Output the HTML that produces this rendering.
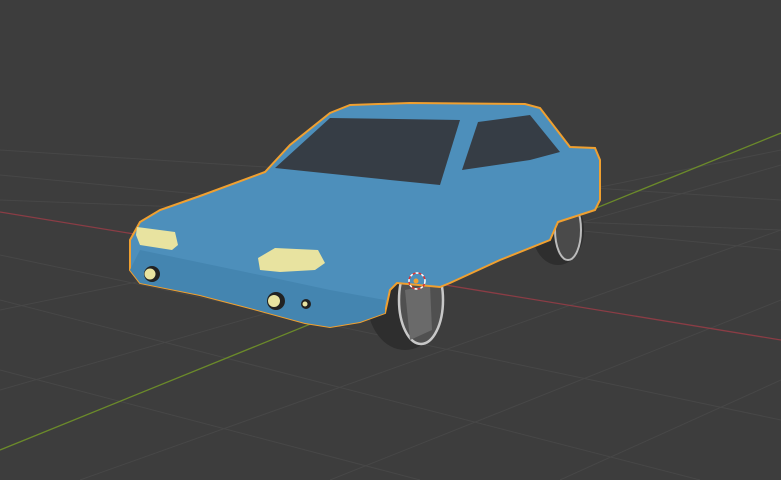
<!DOCTYPE html>
<html><head><style>html,body{margin:0;padding:0;background:#3d3d3d;overflow:hidden}svg{display:block}</style></head>
<body>
<svg width="781" height="480" viewBox="0 0 781 480" xmlns="http://www.w3.org/2000/svg">
<rect width="781" height="480" fill="#3d3d3d"/>
<g stroke="#474747" stroke-width="1" fill="none">
<line x1="0" y1="150" x2="781" y2="200"/>
<line x1="0" y1="175" x2="781" y2="250"/>
<line x1="0" y1="255" x2="781" y2="420"/>
<line x1="0" y1="300" x2="700" y2="480"/>
<line x1="0" y1="370" x2="420" y2="480"/>
<line x1="0" y1="310" x2="781" y2="150"/>
<line x1="0" y1="390" x2="781" y2="165"/>
<line x1="80" y1="480" x2="781" y2="230"/>
<line x1="330" y1="480" x2="781" y2="300"/>
<line x1="560" y1="480" x2="781" y2="380"/>
<line x1="0" y1="200" x2="781" y2="230"/>
</g>
<line x1="0" y1="212" x2="781" y2="340" stroke="#8a3d45" stroke-width="1.3"/>
<line x1="0" y1="450" x2="781" y2="133" stroke="#6b8a2a" stroke-width="1.3"/>
<!-- rear wheel -->
<ellipse cx="558" cy="230" rx="26" ry="35" fill="#2e2e2e"/>
<ellipse cx="568" cy="230" rx="13" ry="30" fill="#4a4a4a" stroke="#bbb" stroke-width="2"/>
<!-- front wheel -->
<ellipse cx="405" cy="300" rx="38" ry="50" fill="#2e2e2e"/>
<ellipse cx="421" cy="300" rx="22" ry="44" fill="#505050" stroke="#c8c8c8" stroke-width="2.5"/>
<path d="M405,290 L430,285 L432,330 L410,340 Z" fill="#6a6a6a"/>
<!-- body -->
<path d="M130,240 L140,222 L160,210 L200,196 L265,172 L290,145 L330,113 L350,105 L410,103 L525,104 L540,108 L570,147 L595,148 L600,160 L600,200 L595,210 L558,222 L550,240 L500,260 L450,283 L440,287 L397,283 L390,290 L385,313 L360,322 L330,327 L305,323 L250,308 L200,295 L140,283 L130,270 Z" fill="#4d8fbb" stroke="#f0a030" stroke-width="2"/>
<path d="M140,250 L260,275 L330,290 L385,300 L385,313 L360,322 L330,327 L305,323 L250,308 L200,295 L140,283 L130,270 Z" fill="#4485b0"/>
<path d="M275,168 L330,118 L460,120 L440,185 L390,180 Z" fill="#363d45"/>
<path d="M462,170 L478,122 L530,115 L560,152 L530,160 Z" fill="#363d45"/>
<path d="M137,227 L175,232 L178,245 L172,250 L140,245 L136,235 Z" fill="#e8e3a0"/>
<path d="M258,258 L275,248 L318,250 L325,263 L315,270 L280,272 L260,270 Z" fill="#e8e3a0"/>
<circle cx="152" cy="274" r="8" fill="#222"/><circle cx="150" cy="274" r="5.5" fill="#e8e3a0"/>
<circle cx="276" cy="301" r="9" fill="#222"/><circle cx="274" cy="301" r="6" fill="#e8e3a0"/>
<circle cx="306" cy="304" r="5" fill="#222"/><circle cx="305" cy="304" r="2.5" fill="#e8e3a0"/>
<circle cx="417" cy="281" r="8" fill="none" stroke="#fff" stroke-width="1.5" stroke-dasharray="3 3"/>
<circle cx="417" cy="281" r="8" fill="none" stroke="#d33" stroke-width="1.5" stroke-dasharray="3 3" stroke-dashoffset="3"/>
<circle cx="416" cy="281" r="2.5" fill="#f0a030"/>
</svg>
</body></html>
